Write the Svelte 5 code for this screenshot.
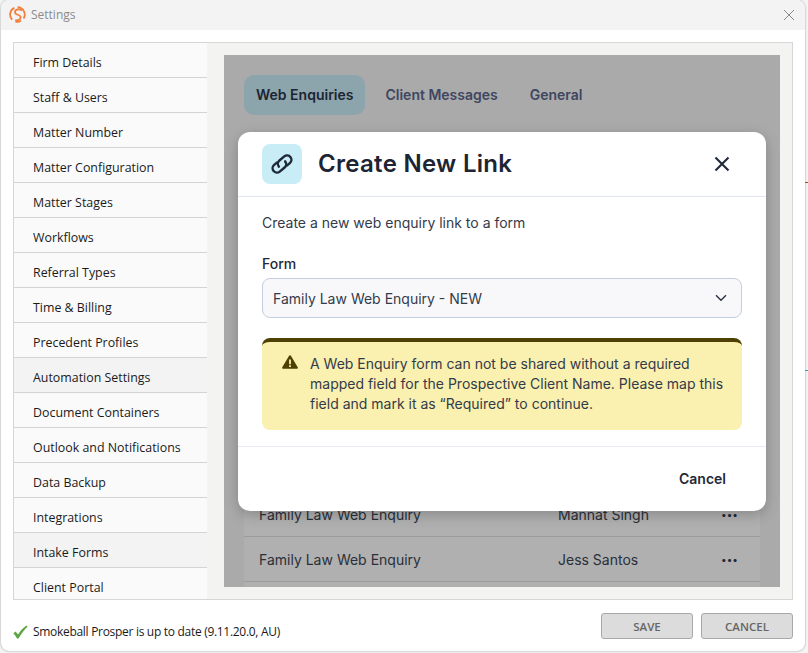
<script>
  const nav = [
    ['Firm Details', false], ['Staff & Users', false], ['Matter Number', false], ['Matter Configuration', false],
    ['Matter Stages', false], ['Workflows', false], ['Referral Types', false], ['Time & Billing', false],
    ['Precedent Profiles', false], ['Automation Settings', true], ['Document Containers', false],
    ['Outlook and Notifications', false], ['Data Backup', false], ['Integrations', false],
    ['Intake Forms', true], ['Client Portal', false]
  ];
  const rows = [['Family Law Web Enquiry', 'Mannat Singh'], ['Family Law Web Enquiry', 'Jess Santos'], ['', '']];
</script>

<div class="desktop">
  <div class="window">
    <header class="titlebar">
      <div class="title">
        <svg width="17" height="17" viewBox="0 0 17 17" fill="none" stroke="#f0803c" stroke-width="1.8">
          <path d="M5.4 1.9A7.3 7.3 0 0 0 3.2 13.6" />
          <path d="M8.6 1.2a7.3 7.3 0 0 1 6 11.2" />
          <path d="M6.4 15.7a7.3 7.3 0 0 0 5.6-.9" />
          <path d="M13 4.6C10.4 2.2 6 3.2 6 6.2c0 3.2 5.6 1.9 5.6 5 0 2.2-2.2 3.4-5.4 3" />
        </svg>
        <span>Settings</span>
      </div>
      <svg class="winclose" width="12" height="12" viewBox="0 0 12 12" stroke="#8a8a8a" stroke-width="1" fill="none"><path d="M1 1l10 10M11 1L1 11" /></svg>
    </header>

    <div class="content">
      <nav class="sidebar">
        {#each nav as [label, alt]}
          <div class="nav-item" class:alt>{label}</div>
        {/each}
      </nav>
      <main class="main">
        <section class="panel">
          <div class="tabs">
            <div class="tab active">Web Enquiries</div>
            <div class="tab">Client Messages</div>
            <div class="tab">General</div>
          </div>
          <div class="table">
            {#each rows as [form, person]}
              <div class="row">
                <span class="c1">{form}</span>
                <span class="c2">{person}</span>
                {#if form}<span class="dots">•••</span>{/if}
              </div>
            {/each}
          </div>
          <div class="overlay">
            <div class="modal">
              <div class="m-head">
                <div class="m-icon">
                  <svg width="28" height="28" viewBox="0 0 22 22" fill="none" stroke="#1f2937" stroke-width="1.9" stroke-linecap="round">
                    <g transform="rotate(-40 11 11)">
                      <path d="M8.6 7.6H5.8a3.4 3.4 0 0 0 0 6.8h5a3.4 3.4 0 0 0 3.4-3.4" />
                      <path d="M13.4 14.4h2.8a3.4 3.4 0 0 0 0-6.8h-5a3.4 3.4 0 0 0-3.4 3.4" />
                    </g>
                  </svg>
                </div>
                <h2>Create New Link</h2>
                <svg class="m-close" width="16" height="16" viewBox="0 0 16 16" fill="none" stroke="#1f2937" stroke-width="2.1"><path d="M1.5 1.5l13 13M14.5 1.5l-13 13" /></svg>
              </div>
              <div class="m-body">
                <p class="intro">Create a new web enquiry link to a form</p>
                <div class="label">Form</div>
                <div class="select">
                  <span>Family Law Web Enquiry - NEW</span>
                  <svg width="12" height="8" viewBox="0 0 12 8" fill="none" stroke="#2b3345" stroke-width="1.4"><path d="M1 1.2l5 5 5-5" /></svg>
                </div>
                <div class="alert">
                  <svg width="16" height="14" viewBox="0 0 16 14"><path fill="#4d4000" d="M8 0.2c.4 0 .7.2.9.5l6.8 11.5c.4.7-.1 1.6-.9 1.6H1.2c-.8 0-1.3-.9-.9-1.6L7.1.7C7.3.4 7.6.2 8 .2z" /><path fill="#faf0b0" d="M7.1 4.4h1.8v4.8H7.1zM7.1 10.2h1.8V12H7.1z" /></svg>
                  <p>A Web Enquiry form can not be shared without a required mapped field for the Prospective Client Name. Please map this field and mark it as “Required” to continue.</p>
                </div>
              </div>
              <div class="m-foot"><span class="m-cancel">Cancel</span></div>
            </div>
          </div>
        </section>
      </main>
    </div>

    <footer class="footer">
      <div class="status">
        <svg width="15" height="14" viewBox="0 0 15 14"><path fill="#5fa544" d="M0.4 8.2l2.2-1.6 2.4 3C7.2 5.8 10 2.8 13.4 0.4l1.2 1C11 5 8 9 5.6 13.6H4C3 11.4 1.8 9.6.4 8.2z" /></svg>
        <span>Smokeball Prosper is up to date (9.11.20.0, AU)</span>
      </div>
      <div class="buttons">
        <button>SAVE</button>
        <button>CANCEL</button>
      </div>
    </footer>
  </div>
  <i class="tick red"></i>
  <i class="tick cyan"></i>
</div>

<style>
  :global(body) { margin: 0; background: #f4f4f4; }
  .desktop { position: relative; width: 808px; height: 653px; overflow: hidden; }
  .tick { position: absolute; left: 805px; width: 3px; height: 1px; }
  .red { top: 182px; background: #c0392b; }
  .cyan { top: 370px; background: #2a9fc4; }
  .window {
    margin-left: 1px; width: 804px; height: 651px; background: #fff; border-radius: 8px;
    box-shadow: 0 0 2px 0 #8a8a8a; display: flex; flex-direction: column; overflow: hidden;
    font-family: "Open Sans", "Noto Sans", sans-serif; font-size: 12.4px; color: #1a1a1a;
  }
  .titlebar { height: 30px; background: #f3f3f3; display: flex; align-items: center; justify-content: space-between; padding: 0 10px 1px 8px; box-sizing: border-box; flex: none; }
  .title { display: flex; align-items: center; gap: 5px; color: #8b8b8b; font-size: 12px; }
  .content { margin: 12px 12px 0; height: 558px; border: 1px solid #d6d6d6; box-sizing: border-box; display: flex; width: 780px; flex: none; }
  .sidebar { width: 193px; flex: none; background: #fafafa; overflow: hidden; }
  .nav-item { height: 35px; box-sizing: border-box; border-bottom: 1px solid #d4d4d4; padding-left: 19px; display: flex; align-items: center; padding-top: 5px; white-space: nowrap; }
  .nav-item.alt { background: #f3f3f3; }
  .main { flex: 1; background: #f3f3f2; padding: 12px 12px 12px 17px; min-width: 0; display: flex; }
  .panel { position: relative; flex: 1; background: #aaaaab; overflow: hidden; font-family: Inter, sans-serif; padding: 20px 20px 0; display: flex; flex-direction: column; }
  .tabs { display: flex; gap: 8px; flex: none; }
  .tab { height: 40px; box-sizing: border-box; padding: 0 12px 2px; display: flex; align-items: center; border-radius: 10px; font-size: 14px; font-weight: 600; color: #3f4660; }
  .tab.active { background: #8ca5ac; color: #1c2433; }
  .table { margin-top: 377px; flex: none; }
  .row { height: 45px; box-sizing: border-box; background: #b0b0b0; border-bottom: 1px solid #9b9ba0; display: flex; align-items: center; font-size: 14px; color: #2a2f38; padding-left: 15px; }
  .c1 { width: 299px; }
  .c2 { width: 163px; }
  .dots { font-size: 10px; color: #1f2937; }
  .overlay { position: absolute; inset: 0; display: flex; align-items: center; justify-content: center; }
  .modal { width: 528px; height: 379px; background: #fff; border-radius: 12px; box-shadow: 0 4px 14px rgba(0,0,0,.22); display: flex; flex-direction: column; color: #1f2937; }
  .m-head { height: 65px; box-sizing: border-box; border-bottom: 1px solid #e2e6ee; display: flex; align-items: center; padding: 0 36px 0 24px; flex: none; }
  .m-icon { width: 40px; height: 40px; border-radius: 8px; background: #c8edf6; display: flex; align-items: center; justify-content: center; flex: none; }
  h2 { margin: 0 0 0 16px; font-size: 24px; font-weight: 600; letter-spacing: 0.3px; flex: 1; color: #1d2433; }
  .m-body { padding: 17px 24px 16px; flex: 1; border-bottom: 1px solid #e7eaf0; }
  .intro { margin: 0; font-size: 14px; line-height: 18px; color: #343b49; }
  .label { margin-top: 23px; font-size: 14px; font-weight: 500; line-height: 18px; }
  .select { margin-top: 5px; height: 40px; box-sizing: border-box; border: 1px solid #c3cde0; border-radius: 8px; background: #f8f8fb; display: flex; align-items: center; justify-content: space-between; padding: 1px 14px 0 10px; font-size: 14px; color: #343b49; }
  .alert { margin-top: 20px; height: 92px; box-sizing: border-box; border-top: 4px solid #4d4000; border-radius: 8px; background: #faf0b0; display: flex; gap: 12px; padding: 12px 16px 0 20px; }
  .alert svg { flex: none; margin-top: 1px; }
  .alert p { margin: 0; font-size: 14px; line-height: 20px; color: #343b49; }
  .m-foot { height: 65px; padding-bottom: 1px; box-sizing: border-box; flex: none; display: flex; align-items: center; justify-content: flex-end; padding-right: 40px; }
  .m-cancel { font-size: 14px; font-weight: 600; color: #1f2937; }
  .footer { flex: 1; display: flex; justify-content: space-between; padding: 13px 12px 12px 12px; box-sizing: border-box; }
  .status { display: flex; align-items: center; gap: 5px; padding-top: 10px; font-size: 12px; letter-spacing: -0.3px; }
  .buttons { display: flex; gap: 8px; }
  button { width: 92px; height: 26px; border: 1px solid #a8a8a8; border-radius: 3px; background: #dcdcdc; font-family: inherit; font-size: 11.5px; font-weight: 600; color: #666; padding: 0; }
</style>
